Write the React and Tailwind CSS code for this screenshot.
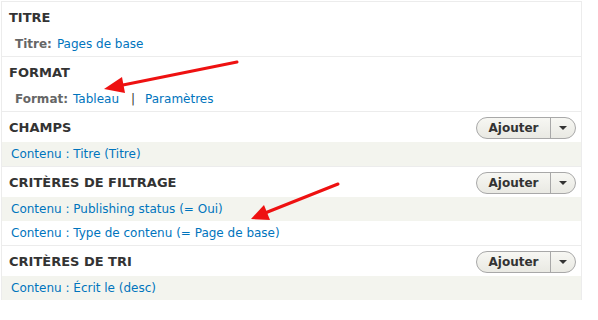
import React from 'react'

function AddButton() {
  return (
    <div className="flex h-[22px] items-stretch rounded-full border border-[#a8a8a8] bg-gradient-to-b from-[#f7f7f3] to-[#e9e9e3] text-[12px] font-bold text-[#333]">
      <span className="flex w-[73px] items-center justify-center">Ajouter</span>
      <span className="flex w-[25px] items-center justify-center border-l border-[#a8a8a8]">
        <span className="h-0 w-0 border-x-[4px] border-t-[4px] border-x-transparent border-t-[#333]" />
      </span>
    </div>
  )
}

function Header({ title, action }) {
  return (
    <div className="flex h-[30px] items-center justify-between pl-[7px] pr-[5px] pt-px">
      <h3 className="text-[13px] font-bold uppercase text-[#333]">{title}</h3>
      {action && <AddButton />}
    </div>
  )
}

function Row({ children, odd }) {
  return (
    <div className={`flex h-[24px] items-center px-[9px] text-[12px] text-[#0074bd] ${odd ? 'bg-[#f3f4ee]' : ''}`}>
      {children}
    </div>
  )
}

function Section({ children, first }) {
  return <div className={first ? '' : 'border-t border-[#ececec]'}>{children}</div>
}

export default function App() {
  return (
    <div className="relative h-[320px] w-[598px] bg-white pl-px pt-px" style={{ fontFamily: '"DejaVu Sans", Verdana, sans-serif' }}>
      <div className="w-[581px] border border-b-0 border-[#ececec]">
        <Section first>
          <Header title="Titre" />
          <div className="flex h-[24px] items-center gap-[5px] px-[13px] text-[12px]">
            <span className="font-bold text-[#666]">Titre:</span>
            <span className="text-[#0074bd]">Pages de base</span>
          </div>
        </Section>
        <Section>
          <Header title="Format" />
          <div className="flex h-[24px] items-center px-[13px] text-[12px]">
            <span className="font-bold text-[#666]">Format:</span>
            <span className="ml-[5px] text-[#0074bd]">Tableau</span>
            <span className="ml-[12px] mr-[10px] text-[#333]">|</span>
            <span className="text-[#0074bd]">Paramètres</span>
          </div>
        </Section>
        <Section>
          <Header title="Champs" action />
          <Row odd>Contenu : Titre (Titre)</Row>
        </Section>
        <Section>
          <Header title="Critères de filtrage" action />
          <Row odd>Contenu : Publishing status (= Oui)</Row>
          <Row>Contenu : Type de contenu (= Page de base)</Row>
        </Section>
        <Section>
          <Header title="Critères de tri" action />
          <Row odd>Contenu : Écrit le (desc)</Row>
        </Section>
      </div>

      <svg className="pointer-events-none absolute left-0 top-0" width="598" height="320">
        <line x1="237" y1="62" x2="118" y2="86" stroke="#ee1111" strokeWidth="3" strokeLinecap="round" />
        <polygon points="104,89 122,77 125,93" fill="#ee1111" />
        <line x1="338" y1="184" x2="265" y2="213" stroke="#ee1111" strokeWidth="3" strokeLinecap="round" />
        <polygon points="251,219 264,205 270,220" fill="#ee1111" />
      </svg>
    </div>
  )
}
